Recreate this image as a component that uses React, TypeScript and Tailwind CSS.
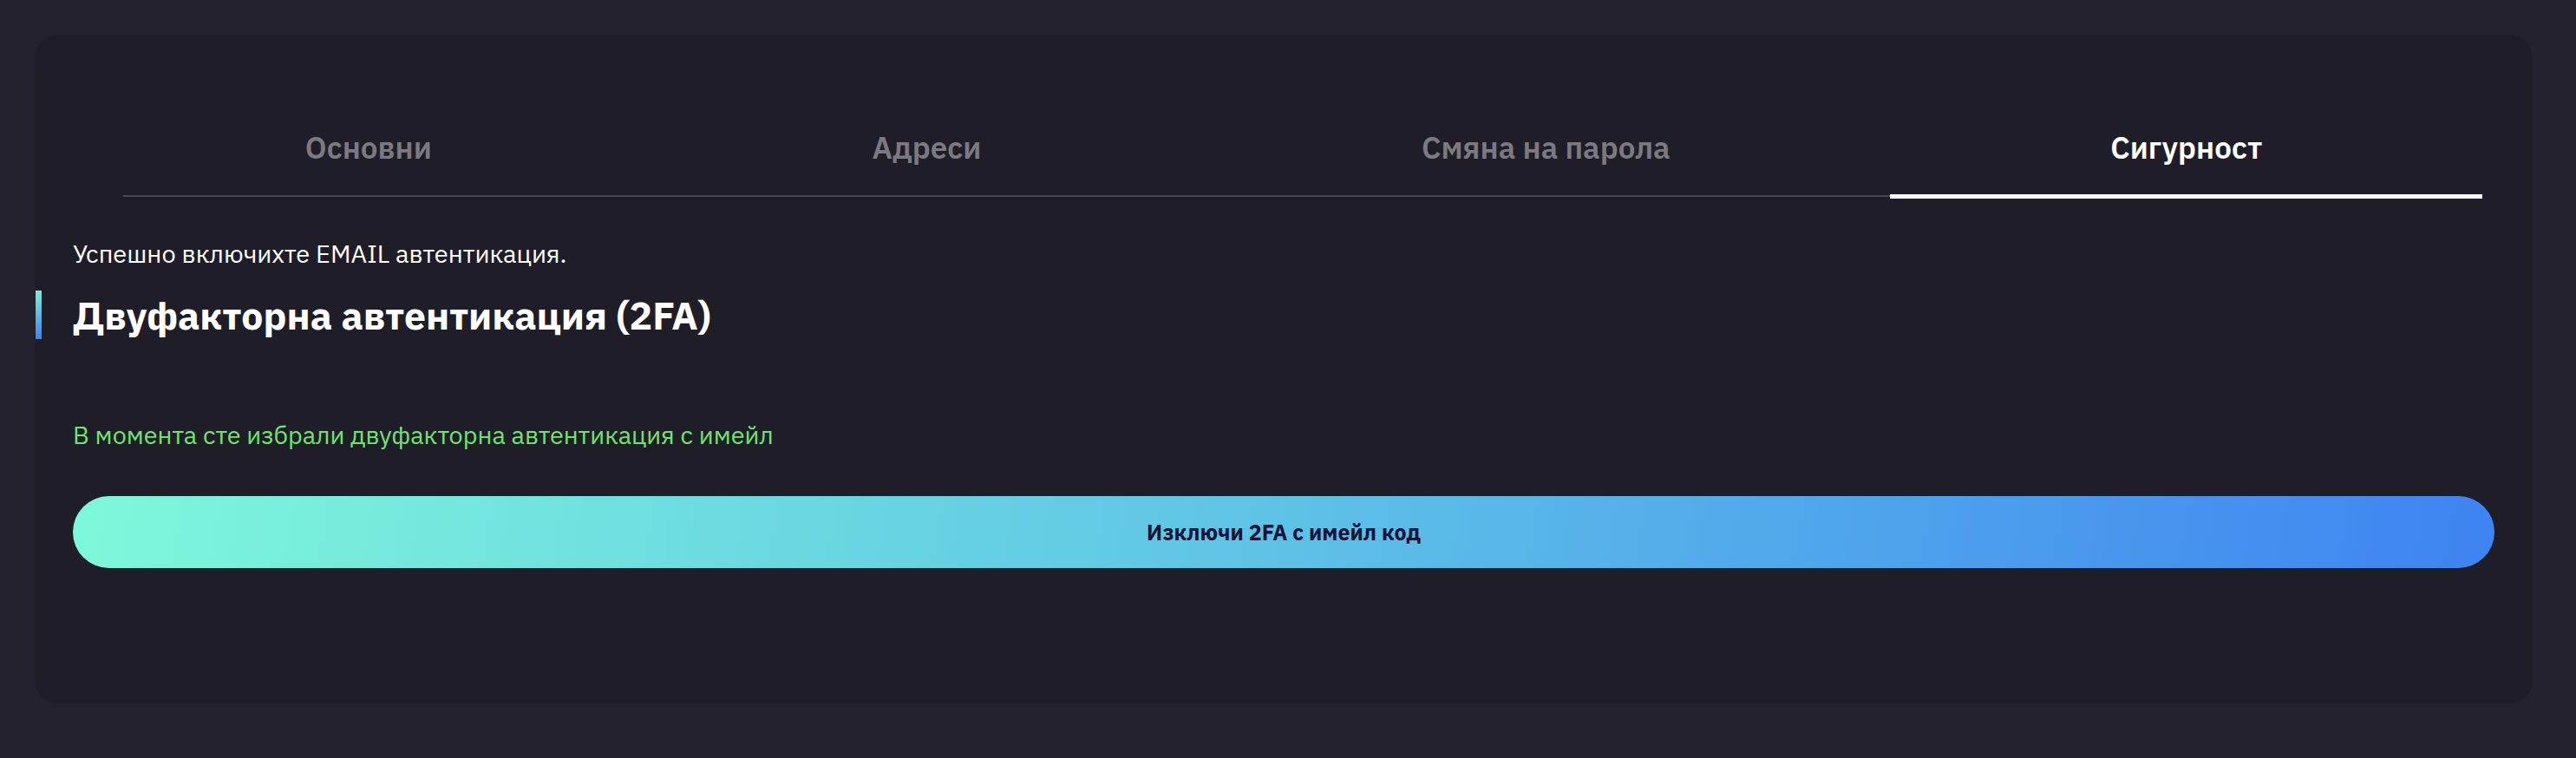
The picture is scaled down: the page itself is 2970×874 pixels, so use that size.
import { useState } from "react";

const tabs = ["Основни", "Адреси", "Смяна на парола", "Сигурност"];

export default function App() {
  const [active, setActive] = useState(3);

  return (
    <div className="min-h-[874px] bg-[#23212d] pt-[40px] pl-[40px] pr-[50px] font-['IBM_Plex_Sans',Roboto,sans-serif]">
      <div className="h-[771px] rounded-[27px] bg-[#1f1d27] px-[44px] pt-[43px]">
        {/* tabs */}
        <div className="relative mx-[14px] flex">
          <div className="absolute bottom-[2px] left-[44px] right-0 h-[2px] bg-[#48464f]" />
          {tabs.map((t, i) => (
            <button
              key={t}
              onClick={() => setActive(i)}
              className={`relative flex-auto pt-[70px] pb-[41px] text-[35px] leading-[35px] font-semibold ${
                i === active ? "text-white" : "text-[#7b7a81]"
              }`}
            >
              {t}
              {i === active && (
                <span className="absolute bottom-0 left-0 right-0 h-[5px] bg-white" />
              )}
            </button>
          ))}
        </div>

        <p className="mt-[45px] text-[29px] leading-[36px] text-white">
          Успешно включихте EMAIL автентикация.
        </p>

        <div className="relative mt-[25px]">
          <span className="absolute -left-[43px] top-0 h-[56px] w-[7px] bg-[linear-gradient(to_bottom,#70f2d9,#3f84f1)]" />
          <h2 className="text-[44.5px] leading-[56px] font-bold text-white">
            Двуфакторна автентикация (2FA)
          </h2>
        </div>

        <p className="mt-[92px] text-[28.8px] leading-[36px] text-[#6fe56f]">
          В момента сте избрали двуфакторна автентикация с имейл
        </p>

        <button className="mt-[53px] flex h-[83px] w-full items-center justify-center rounded-full bg-[linear-gradient(100deg,#7ef8da,#5ec2e6_50%,#3e83f1)] text-[25px] font-bold text-[#17133a]">
          Изключи 2FA с имейл код
        </button>
      </div>
    </div>
  );
}
